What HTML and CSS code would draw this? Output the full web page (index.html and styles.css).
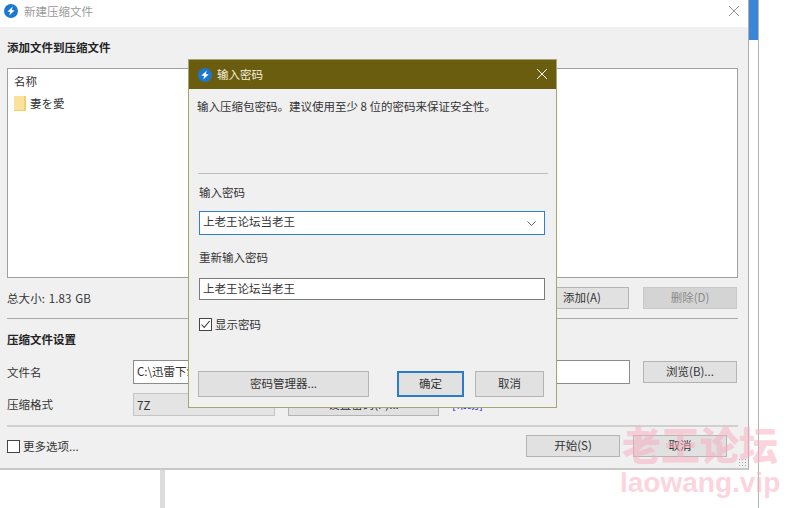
FILE: index.html
```html
<!DOCTYPE html>
<html lang="zh-CN">
<head>
    <meta charset="UTF-8">
    <title>新建压缩文件</title>
    <link rel="stylesheet" href="styles.css">
</head>
<body>
    <div class="backdrop-bar"></div>
    <div class="scrollbar"><div class="scroll-thumb"></div></div>

    <div class="main-window">
        <div class="titlebar">
            <svg class="app-icon" viewBox="0 0 14 14"><circle cx="7" cy="7" r="7" fill="#1a78d2"/><path d="M8.8 2.4 3.4 7.4 6.2 8 5.2 11.6 10.6 6.6 7.8 6z" fill="#fff"/></svg>
            <span class="title-text">新建压缩文件</span>
            <svg class="close-icon" viewBox="0 0 10 10"><path d="M0 0 10 10M10 0 0 10" stroke="#999" fill="none"/></svg>
        </div>
        <div class="main-body">
            <div class="heading first">添加文件到压缩文件</div>
            <div class="file-list">
                <div class="list-head">名称</div>
                <div class="list-row">
                    <span class="folder"></span>
                    <span class="folder-name">妻を愛</span>
                </div>
            </div>
            <div class="row size-row">
                <span class="grow total">总大小: 1.83 GB</span>
                <button class="btn">添加(A)</button>
                <button class="btn disabled">删除(D)</button>
            </div>
            <div class="rule"></div>
            <div class="heading">压缩文件设置</div>
            <div class="row name-row">
                <span class="field-label">文件名</span>
                <div class="path-input">C:\迅雷下载\妻を愛.7z</div>
                <button class="btn">浏览(B)...</button>
            </div>
            <div class="row format-row">
                <span class="field-label">压缩格式</span>
                <div class="format-select">7Z</div>
                <button class="btn wide">设置密码(P)...</button>
                <span class="help-link">[帮助]</span>
            </div>
            <div class="rule thick"></div>
            <div class="row bottom-row">
                <span class="check"></span>
                <span class="grow more">更多选项...</span>
                <button class="btn">开始(S)</button>
                <button class="btn">取消</button>
            </div>
        </div>
        <div class="grip"></div>
    </div>

    <div class="dialog">
        <div class="dialog-title">
            <svg class="app-icon" viewBox="0 0 14 14"><circle cx="7" cy="7" r="7" fill="#1a78d2"/><path d="M8.8 2.4 3.4 7.4 6.2 8 5.2 11.6 10.6 6.6 7.8 6z" fill="#fff"/></svg>
            <span class="dialog-title-text">输入密码</span>
            <svg class="dialog-close" viewBox="0 0 10 10"><path d="M0 0 10 10M10 0 0 10" stroke="#fff" fill="none"/></svg>
        </div>
        <div class="dialog-body">
            <p class="intro">输入压缩包密码。建议使用至少 8 位的密码来保证安全性。</p>
            <div class="dialog-rule"></div>
            <div class="dialog-label">输入密码</div>
            <div class="pw-field focused">
                <span>上老王论坛当老王</span>
                <svg class="chevron" viewBox="0 0 9 5"><path d="M.5.5 4.5 4.5 8.5.5" stroke="#666" fill="none"/></svg>
            </div>
            <div class="dialog-label second">重新输入密码</div>
            <div class="pw-field plain">上老王论坛当老王</div>
            <div class="show-row">
                <span class="check checked">
                    <svg viewBox="0 0 11 11"><path d="M1.5 5.5 4.2 8.5 9.5 2" stroke="#333" stroke-width="1.1" fill="none"/></svg>
                </span>
                <span class="show-text">显示密码</span>
            </div>
            <div class="dialog-buttons">
                <button class="btn manager">密码管理器...</button>
                <button class="btn ok">确定</button>
                <button class="btn cancel">取消</button>
            </div>
        </div>
    </div>

    <div class="watermark">
        <div class="wm-cn">老王论坛</div>
        <div class="wm-en">laowang.vip</div>
    </div>
</body>
</html>
```

FILE: styles.css
```css
* { box-sizing: border-box; }
html, body { margin: 0; height: 100%; }
body { position: relative; width: 800px; height: 508px; overflow: hidden; background: #fff; color: #333; font-family: "Noto Sans CJK SC", "Liberation Sans", sans-serif; font-size: 11.5px; line-height: 16px; }
button { font: inherit; color: inherit; padding: 0 0 2px; }
p { margin: 0; }

.backdrop-bar { position: absolute; left: 160px; top: 469px; width: 5px; height: 39px; background: #dcdcdc; }
.scrollbar { position: absolute; left: 748px; top: 0; width: 11px; height: 508px; border-right: 1px solid #b4b4b4; }
.scroll-thumb { height: 40px; background: #3a86d8; }

/* main window */
.main-window { position: absolute; left: 0; top: 0; width: 749px; height: 470px; background: #f0f0f0; border-right: 1px solid #adadad; border-bottom: 2px solid #c8c8c8; }
.titlebar { display: flex; align-items: center; height: 27px; padding: 0 9px 5px 4px; background: #fff; }
.app-icon { width: 14px; height: 14px; flex: none; }
.title-text { flex: 1; margin-left: 6px; color: #9a9a9a; }
.close-icon { width: 10px; height: 10px; }
.main-body { padding: 0 10px 0 7px; }
.heading { margin: 11px 0 1px; line-height: 18px; font-weight: 700; color: #222; }
.heading.first { margin: 11px 0 12px; }
.file-list { height: 210px; padding: 4px 6px; background: #fff; border: 1px solid #9f9f9f; }
.list-head { line-height: 16px; }
.list-row { display: flex; align-items: center; gap: 4px; margin-top: 6px; height: 16px; }
.folder { width: 12px; height: 15px; background: #fbe29a; border-right: 2px solid #f3cf72; border-bottom: 1px solid #f3cf72; }
.row { display: flex; align-items: center; }
.grow, .field-label, .help-link { padding-bottom: 1px; }
.grow { flex: 1; }
.total { word-spacing: 1px; letter-spacing: 0.1px; }
.size-row { height: 22px; margin-top: 9px; padding-right: 1px; }
.size-row .btn + .btn { margin-left: 14px; }
.rule { height: 1px; margin-top: 9px; background: #a8a8a8; }
.rule.thick { height: 2px; background: #d0d0d0; }
.name-row { height: 24px; margin-top: 12px; }
.field-label { width: 126px; flex: none; }
.path-input { width: 497px; height: 24px; padding: 2px 3px; margin-right: 13px; background: #fff; border: 1px solid #8c8c8c; }
.format-row { height: 23px; margin-top: 9px; }
.format-select { width: 142px; height: 23px; padding: 3px; margin-right: 13px; background: #e4e4e4; border: 1px solid #c4c4c4; }
.format-row .btn { height: 23px; }
.help-link { margin-left: 13px; color: #2a2ad0; }
.bottom-row { height: 22px; margin-top: 8px; padding-right: 11px; }
.bottom-row .btn + .btn { margin-left: 13px; }
.more { margin-left: 3px; }
.check { display: block; flex: none; width: 13px; height: 13px; background: #fff; border: 1px solid #444; }
.check svg { display: block; width: 11px; height: 11px; }
.grip { position: absolute; right: 2px; bottom: 2px; width: 8px; height: 8px; background: radial-gradient(circle, #a8a8a8 1px, transparent 1px) 0 0 / 3px 3px; }

.btn { width: 94px; height: 22px; background: #e1e1e1; border: 1px solid #b4b4b4; }
.btn.disabled { color: #8a8a8a; background: #d4d4d4; border-color: #c8c8c8; }
.btn.wide { width: 151px; }

/* password dialog */
.dialog { position: absolute; left: 188px; top: 59px; width: 369px; height: 349px; background: #f0f0f0; border: 1px solid #a5a572; }
.dialog-title { display: flex; align-items: center; height: 29px; padding: 0 9px 0 9px; background: #6b5d10; color: #f4f0dc; }
.dialog-title-text { flex: 1; margin-left: 5px; padding-bottom: 2px; }
.dialog-close { width: 10px; height: 10px; margin-bottom: 1px; }
.dialog-body { padding: 9px 11px 0 10px; }
.intro { margin-left: -2px; white-space: nowrap; }
.dialog-rule { height: 1px; margin: 59px -3px 0 -1px; background: #bdbdbd; }
.dialog-label { margin-top: 10px; line-height: 16px; }
.dialog-label.second { margin-top: 14px; }
.pw-field { display: flex; align-items: center; justify-content: space-between; width: 346px; height: 24px; margin-top: 11px; padding: 0 8px 4px 3px; background: #fff; border: 1px solid #8a8a8a; }
.pw-field.focused { border-color: #2d7fd0; }
.pw-field.plain { height: 22px; margin-top: 13px; padding-bottom: 2px; border-color: #7a7a7a; }
.chevron { width: 9px; height: 5px; margin-top: 4px; }
.show-row { display: flex; align-items: center; gap: 3px; margin-top: 18px; height: 13px; }
.show-text { padding-bottom: 2px; }
.dialog-buttons { display: flex; margin: 40px 0 0 -1px; }
.manager { width: 171px; height: 26px; }
.ok { width: 67px; height: 26px; margin-left: 28px; border: 2px solid #2a7cc8; }
.cancel { width: 69px; height: 26px; margin-left: 11px; }

.watermark { position: absolute; left: 620px; top: 421px; width: 160px; color: rgba(250, 170, 190, 0.5); text-align: center; pointer-events: none; }
.wm-cn { font-size: 39px; line-height: 44px; font-weight: 900; }
.wm-en { font-family: "Liberation Sans", sans-serif; font-size: 28px; line-height: 36px; font-weight: 700; white-space: nowrap; }
```
